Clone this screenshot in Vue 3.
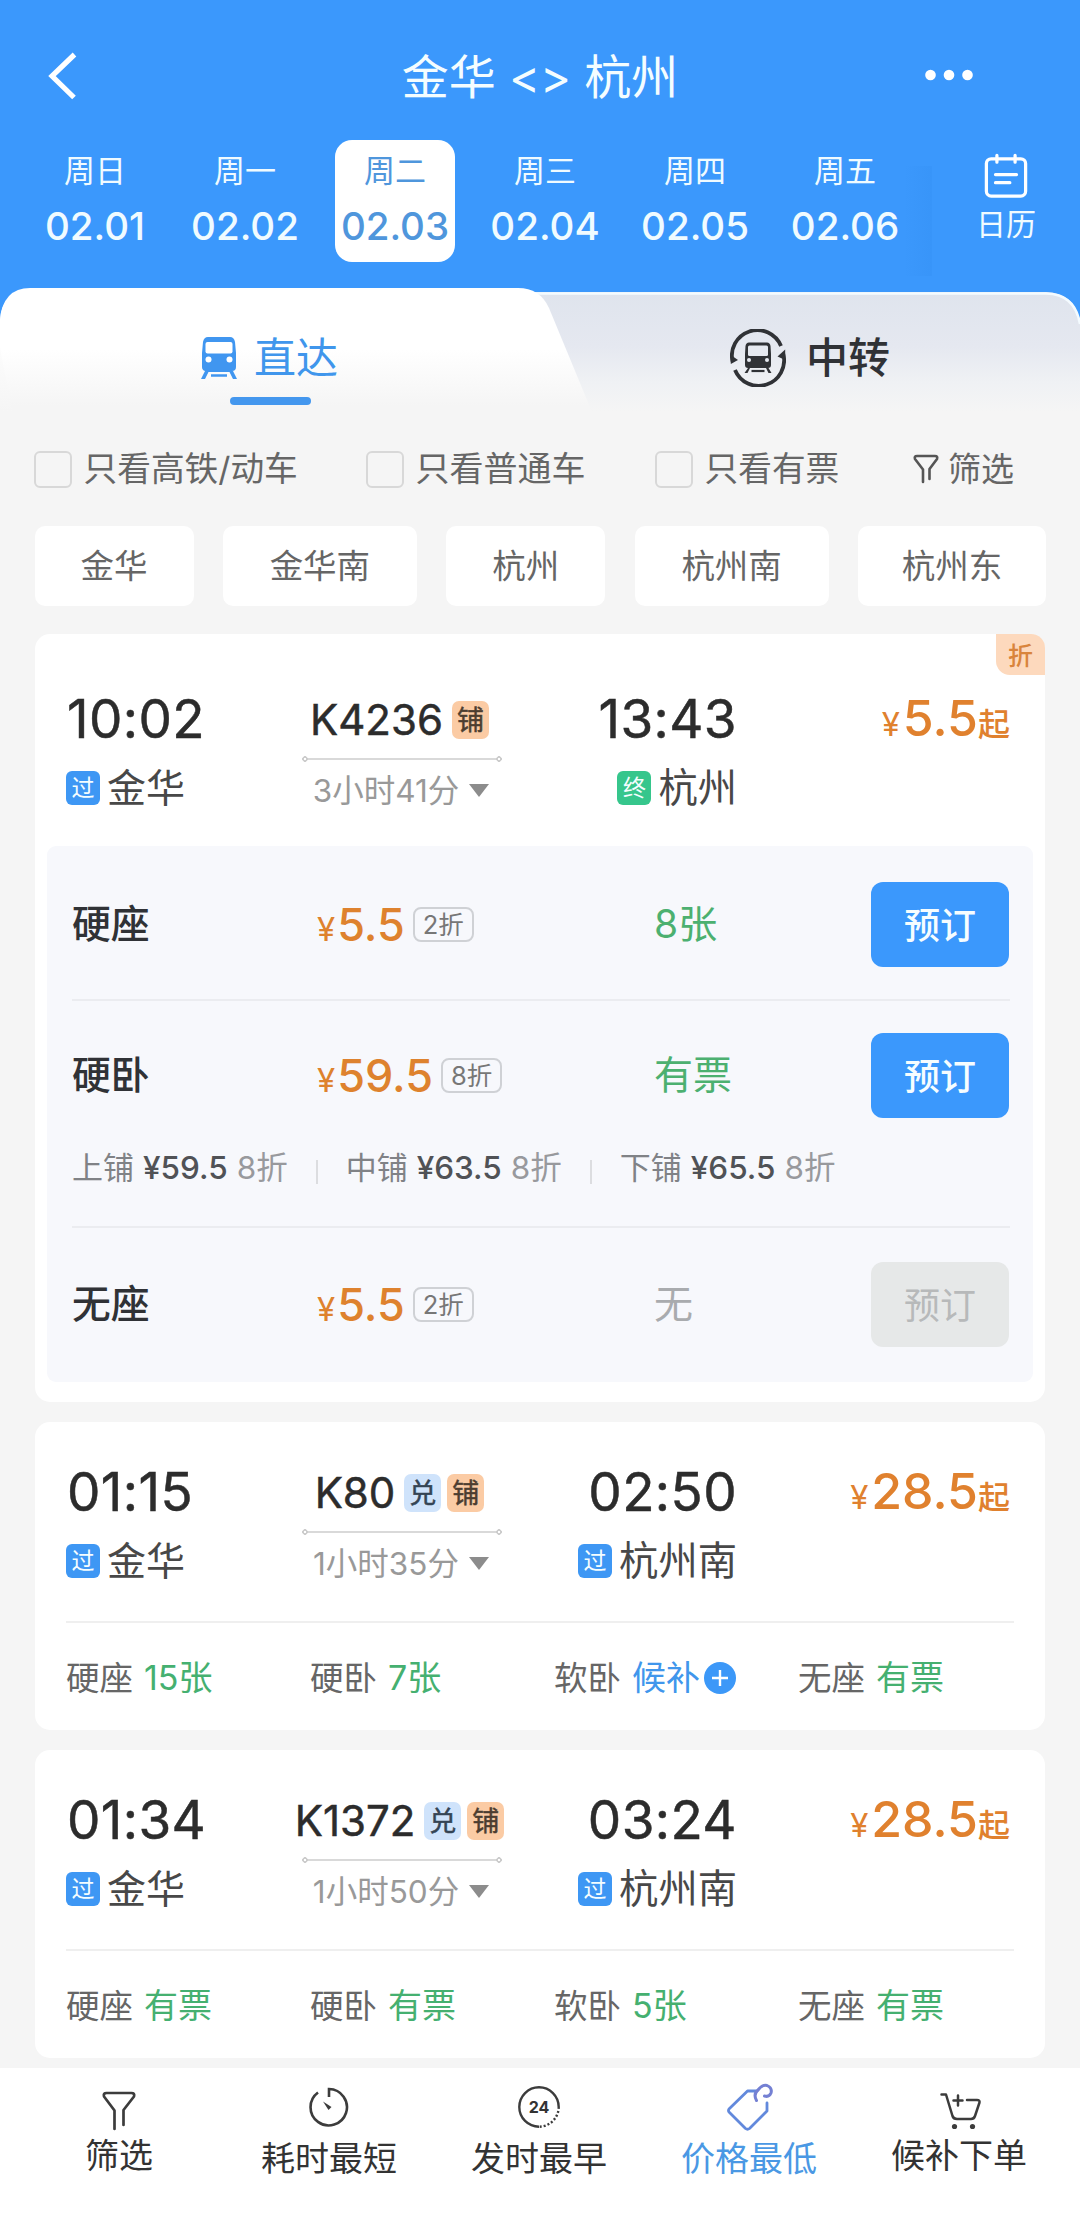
<script setup>
const days = [
  { week: '周日', date: '02.01' },
  { week: '周一', date: '02.02' },
  { week: '周二', date: '02.03', active: true },
  { week: '周三', date: '02.04' },
  { week: '周四', date: '02.05' },
  { week: '周五', date: '02.06' },
]

const checks = [
  { text: '只看高铁/动车', cls: 'c1' },
  { text: '只看普通车', cls: 'c2' },
  { text: '只看有票', cls: 'c3' },
]

const stations = [
  { name: '金华', cls: 's1' },
  { name: '金华南', cls: 's2' },
  { name: '杭州', cls: 's1' },
  { name: '杭州南', cls: 's2' },
  { name: '杭州东', cls: 's3' },
]

const trains = [
  {
    no: 'K4236', tags: ['铺'], depart: '10:02', arrive: '13:43', duration: '3小时41分',
    from: '金华', to: '杭州', toTag: '终', price: '5.5', discount: true,
    rows: [
      { seat: '硬座', price: '5.5', off: '2折', left: '8张', open: true },
      {
        seat: '硬卧', price: '59.5', off: '8折', left: '有票', open: true,
        berths: [
          { name: '上铺', price: '¥59.5', off: '8折' },
          { name: '中铺', price: '¥63.5', off: '8折' },
          { name: '下铺', price: '¥65.5', off: '8折' },
        ],
      },
      { seat: '无座', price: '5.5', off: '2折', left: '无', open: false },
    ],
  },
  {
    no: 'K80', tags: ['兑', '铺'], depart: '01:15', arrive: '02:50', duration: '1小时35分',
    from: '金华', to: '杭州南', toTag: '过', price: '28.5',
    seats: [
      { name: '硬座', left: '15张' },
      { name: '硬卧', left: '7张' },
      { name: '软卧', left: '候补', wait: true },
      { name: '无座', left: '有票' },
    ],
  },
  {
    no: 'K1372', tags: ['兑', '铺'], depart: '01:34', arrive: '03:24', duration: '1小时50分',
    from: '金华', to: '杭州南', toTag: '过', price: '28.5',
    seats: [
      { name: '硬座', left: '有票' },
      { name: '硬卧', left: '有票' },
      { name: '软卧', left: '5张' },
      { name: '无座', left: '有票' },
    ],
  },
]
</script>

<template>
  <div class="page">
    <header class="head">
      <div class="title-bar">
        <svg class="back" width="34" height="50" viewBox="0 0 34 50"><path d="M29.500 3.500 L7 25 L29 46.500" fill="none" stroke="#fff" stroke-width="5.200" /></svg>
        <h1>金华 &lt;&gt; 杭州</h1>
        <svg class="more" width="50" height="14" viewBox="0 0 50 14" fill="#fff"><circle cx="6.500" cy="7" r="5.300" /><circle cx="25" cy="7" r="5.300" /><circle cx="43.500" cy="7" r="5.300" /></svg>
      </div>
      <div class="dates">
        <div class="days">
          <div v-for="d in days" :key="d.date" class="day" :class="{ active: d.active }">
            <span class="week">{{ d.week }}</span>
            <span class="date">{{ d.date }}</span>
          </div>
        </div>
        <div class="calendar">
          <svg width="44" height="46" viewBox="0 0 46 48" fill="none" stroke="#fff" stroke-width="3.400" stroke-linecap="round">
            <rect x="2.500" y="6" width="41" height="39" rx="5" />
            <path d="M13.500 2.500v7M32.500 2.500v7M12 22.500h22M12 31h15" />
          </svg>
          <span>日历</span>
        </div>
      </div>
    </header>

    <nav class="tabs">
      <svg class="tabs-bg" width="1080" height="124" viewBox="0 0 1080 124">
        <defs>
          <linearGradient id="idle" x1="0" y1="0" x2="0" y2="1">
            <stop offset="0" stop-color="#dfe4ed" /><stop offset=".45" stop-color="#e5e8f0" /><stop offset=".75" stop-color="#eff1f4" /><stop offset="1" stop-color="#f5f5f5" />
          </linearGradient>
          <linearGradient id="side" x1="0" y1="0" x2="0" y2="1">
            <stop offset=".3" stop-color="#fff" /><stop offset="1" stop-color="#f5f5f5" />
          </linearGradient>
          <linearGradient id="live" x1="0" y1="0" x2="0" y2="1">
            <stop offset=".5" stop-color="#fff" /><stop offset=".95" stop-color="#f5f5f5" />
          </linearGradient>
        </defs>
        <path d="M0 124V32Q1 4 30 4H300V124Z" fill="url(#side)" />
        <path d="M300 124V4H1046Q1076 5 1080 36V124Z" fill="url(#idle)" />
        <path d="M500 5.500H1046Q1075 6 1080 36" fill="none" stroke="#f4fbff" stroke-width="2.500" />
        <path d="M12 124L0 60V32Q3 0 30 0H518Q540 0 549 20L592 124Z" fill="url(#live)" />
      </svg>
      <div class="tab on">
        <svg width="36" height="42" viewBox="0 0 36 42">
          <path d="M7 0H29Q33 0 34 5L35 16V30Q35 34 31 34H32L36 42H32L28.500 35H7.500L4 42H0L4 34Q1 33 1 30V16L2 5Q3 0 7 0Z" fill="#4096f0" />
          <rect x="4.500" y="5" width="27" height="11.500" rx="2" fill="#fff" />
          <circle cx="7.500" cy="22.500" r="3" fill="#fff" /><circle cx="28.500" cy="22.500" r="3" fill="#fff" />
          <path d="M10 38.500H26" stroke="#4096f0" stroke-width="2.500" />
        </svg>
        <span>直达</span>
        <i class="bar"></i>
      </div>
      <div class="tab off">
        <svg width="56" height="58" viewBox="0 0 56 58" fill="none" stroke="#303236" stroke-width="3.800">
          <path d="M51 17A25.500 25.500 0 0 0 2.700 33" />
          <path d="M5 41A25.500 25.500 0 0 0 53.300 25" />
          <path d="M0.800 35V26L8 31Z" fill="#303236" stroke="none" />
          <path d="M55.200 20.500V31L47.500 27.500Z" fill="#303236" stroke="none" />
          <path d="M19 13.500H37Q40 13.500 40.500 17L41 25V36Q41 39 38 39H38.500L41.500 44H38.500L36 39H20L17.500 44H14.500L18 39Q15 39 15 36V25L15.500 17Q16 13.500 19 13.500Z" fill="#303236" stroke="none" />
          <rect x="18" y="16.500" width="20" height="10.500" rx="1.500" fill="#e6e9f0" stroke="none" />
          <circle cx="19" cy="31" r="2" fill="#e6e9f0" stroke="none" /><circle cx="37" cy="31" r="2" fill="#e6e9f0" stroke="none" />
          <path d="M21.500 42H34.500" stroke-width="2.200" />
        </svg>
        <span>中转</span>
      </div>
    </nav>

    <div class="checks">
      <label v-for="c in checks" :key="c.text" class="check" :class="c.cls"><i class="box"></i><span>{{ c.text }}</span></label>
      <div class="funnel">
        <svg width="26" height="30" viewBox="0 0 26 30" fill="none" stroke="#555" stroke-width="2.600" stroke-linejoin="round" stroke-linecap="round"><path d="M10 28V15.500L2 5Q1 2 4 2H22Q25 2 24 5L16.500 15V25" /></svg>
        <span>筛选</span>
      </div>
    </div>

    <div class="chips">
      <div v-for="s in stations" :key="s.name" class="chip" :class="s.cls">{{ s.name }}</div>
    </div>

    <main class="list">
      <section v-for="t in trains" :key="t.no" class="card" :class="{ opened: t.rows }">
        <b v-if="t.discount" class="corner">折</b>
        <div class="summary">
          <div class="end">
            <div class="time">{{ t.depart }}</div>
            <div class="place"><i class="mark">过</i>{{ t.from }}</div>
          </div>
          <div class="mid">
            <div class="no">{{ t.no }}<i v-for="g in t.tags" :key="g" class="tag" :class="{ blue: g === '兑' }">{{ g }}</i></div>
            <div class="track"></div>
            <div class="dur">{{ t.duration }}<i class="caret"></i></div>
          </div>
          <div class="end right">
            <div class="time">{{ t.arrive }}</div>
            <div class="place"><i class="mark" :class="{ green: t.toTag === '终' }">{{ t.toTag }}</i>{{ t.to }}</div>
          </div>
          <div class="from-price"><small>¥</small>{{ t.price }}<em>起</em></div>
        </div>

        <div v-if="t.rows" class="panel">
          <div v-for="r in t.rows" :key="r.seat" class="class-row">
            <div class="line">
              <span class="seat">{{ r.seat }}</span>
              <span class="fare"><small>¥</small>{{ r.price }}<i class="off-tag">{{ r.off }}</i></span>
              <span class="left" :class="{ none: !r.open }">{{ r.left }}</span>
              <button class="book" :class="{ disabled: !r.open }">预订</button>
            </div>
            <div v-if="r.berths" class="berths">
              <span v-for="b in r.berths" :key="b.name" class="berth">{{ b.name }}<b>{{ b.price }}</b><i>{{ b.off }}</i></span>
            </div>
          </div>
        </div>

        <div v-else class="seats">
          <div v-for="s in t.seats" :key="s.name" class="seat-cell">
            <span>{{ s.name }}</span><span class="val" :class="{ wait: s.wait }">{{ s.left }}</span>
            <svg v-if="s.wait" width="32" height="32" viewBox="0 0 32 32"><circle cx="16" cy="16" r="16" fill="#3c98f8" /><path d="M16 8V24M8 16H24" stroke="#fff" stroke-width="2.400" /></svg>
          </div>
        </div>
      </section>
    </main>

    <footer class="bottom">
      <div class="act high">
        <svg width="34" height="40" viewBox="0 0 34 40" fill="none" stroke="#3c3c3c" stroke-width="2.700" stroke-linecap="round" stroke-linejoin="round"><path d="M12.500 38V19.500L2 5.500Q1 2 4.500 2H29.500Q33 2 32 5.500L21.500 19V34" /></svg>
        <span>筛选</span>
      </div>
      <div class="act">
        <svg width="42" height="42" viewBox="0 0 42 42" fill="none" stroke="#3c3c3c" stroke-width="2.600"><path d="M21 11V3A18.200 18.200 0 1 1 10 6.500" /><path d="M15 15.500L23.500 21L20.500 24Z" fill="#3c3c3c" stroke="none" /></svg>
        <span>耗时最短</span>
      </div>
      <div class="act">
        <div class="clock24">
          <svg width="44" height="44" viewBox="0 0 44 44" fill="none" stroke="#3c3c3c" stroke-width="2.400"><path d="M22 41.700A19.700 19.700 0 1 1 41.700 22" /><path d="M41.700 22A19.700 19.700 0 0 1 22 41.700" stroke-dasharray="2 2" /></svg>
          <b>24</b>
        </div>
        <span>发时最早</span>
      </div>
      <div class="act picked">
        <svg width="48" height="48" viewBox="0 0 48 48" fill="none" stroke="#6289dc" stroke-width="2.800" stroke-linejoin="round" stroke-linecap="round"><path d="M32 8H22.500L4 26Q3 27.500 4 29L20.500 45.500Q22.500 47 24.500 45.500L42 28V20" /><path d="M31.500 17.500Q28 11 33 7Q37 1.500 42 2.500Q47.500 5 46 10Q44 14.500 39.500 13" stroke="#7480d3" stroke-width="3" /></svg>
        <span>价格最低</span>
      </div>
      <div class="act high cart">
        <svg width="42" height="38" viewBox="0 0 42 38" fill="none" stroke="#3c3c3c" stroke-width="2.500" stroke-linecap="round" stroke-linejoin="round"><path d="M1.500 2.500H6L12.500 24Q13.500 27 17 27H31Q34 27 35 24L39.500 10.500Q40 8 37 8H27M18 3.500V13.500M13.500 8.500H22.500" /><circle cx="14.500" cy="34.500" r="2.600" fill="#3c3c3c" stroke="none" /><circle cx="32.500" cy="34.500" r="2.600" fill="#3c3c3c" stroke="none" /></svg>
        <span>候补下单</span>
      </div>
    </footer>
  </div>
</template>

<style>
body { background: #f5f5f5; }
</style>

<style scoped>
* { box-sizing: border-box; }
i, em { font-style: normal; }
.page { width: 1080px; height: 2228px; overflow: hidden; background: #f5f5f5; font-family: Inter, "Noto Sans CJK SC", sans-serif; color: #333; display: flex; flex-direction: column; }

.head { background: #3b98fc; height: 288px; color: #fff; flex: none; }
.title-bar { height: 140px; padding: 14px 106px 0 45px; display: grid; grid-template-columns: 200px 1fr 139px; align-items: center; }
.title-bar .back { margin-top: -2px; }
.title-bar .more { justify-self: end; margin-top: -4px; }
h1 { margin: 0; font-size: 47px; font-weight: 400; line-height: 60px; text-align: center; color: #f4fdff; }
.dates { display: flex; height: 148px; }
.days { width: 932px; padding-left: 20px; display: flex; background: linear-gradient(90deg, rgba(30, 120, 220, 0) 97%, rgba(30, 120, 220, .1)) no-repeat 0 26px / 932px 110px; }
.day { width: 120px; height: 122px; margin: 0 15px; border-radius: 17px; display: flex; flex-direction: column; align-items: center; color: #f0fbff; }
.day.active { background: #fff; color: #4f96dc; }
.week { font-size: 31px; line-height: 40px; margin-top: 11px; }
.date { font-size: 38.500px; line-height: 48px; margin-top: 11px; font-weight: 500; }
.calendar { width: 148px; display: flex; flex-direction: column; align-items: center; padding-top: 13px; color: #f0fbff; }
.calendar span { font-size: 30px; line-height: 40px; margin-top: 5px; }

.tabs { position: relative; display: flex; height: 124px; flex: none; background: linear-gradient(#3b98fc 60px, #f5f5f5 60px); }
.tabs-bg { position: absolute; left: 0; top: 0; }
.tab { position: relative; height: 124px; display: flex; align-items: center; font-size: 42px; }
.tab.on { width: 540px; padding: 0 0 0 201px; color: #4096ec; }
.tab.on svg { margin-top: 15px; }
.tab.on span { margin-left: 17px; margin-top: 8px; font-weight: 400; }
.bar { position: absolute; left: 230px; top: 109px; width: 81px; height: 8px; border-radius: 4px; background: #4497ee; }
.tab.off { width: 540px; padding-left: 190px; color: #303236; }
.tab.off svg { margin-top: 16px; }
.tab.off span { margin-left: 20px; margin-top: 8px; font-weight: 500; }

.checks { display: flex; align-items: center; height: 114px; flex: none; padding-left: 34px; color: #666; font-size: 33.700px; }
.check { display: flex; align-items: center; }
.check.c1 { width: 332px; }
.check.c2 { width: 289px; font-size: 34px; }
.check.c3 { width: 258px; }
.box { width: 38px; height: 37px; border: 2.500px solid #d8d8d8; border-radius: 6px; margin-right: 11.500px; }
.check span, .funnel span { line-height: 44px; }
.funnel { display: flex; align-items: center; font-size: 33px; }
.funnel svg { margin-right: 9px; }

.chips { display: flex; justify-content: space-between; padding: 0 34px 0 34.500px; height: 80px; flex: none; }
.chip { height: 80px; line-height: 81px; border-radius: 10px; background: #fff; text-align: center; font-size: 33.500px; color: #666; }
.s1 { width: 159px; }
.s2 { width: 194px; }
.s3 { width: 188px; }

.list { margin-top: 28px; padding: 0 35px; display: flex; flex-direction: column; gap: 20px; flex: none; }
.card { position: relative; background: #fff; border-radius: 15px; height: 308px; padding: 40px 0 0; }
.card.opened { height: 768px; padding-top: 55px; }
.corner { position: absolute; right: 0; top: 0; width: 49px; height: 41px; line-height: 44px; text-align: center; border-radius: 0 14px 0 14px; background: #fdd9bd; color: #d9843c; font-size: 25px; font-weight: 500; }
.summary { display: grid; grid-template-columns: 235px 202px 234px 273px; padding-left: 31px; height: 159px; }
.card.opened .summary { height: 157px; }
.time { font-size: 53px; line-height: 60px; font-weight: 400; letter-spacing: .4px; padding-left: 1px; color: #2c2c2c; -webkit-text-stroke: .5px #2c2c2c; }
.place { display: flex; align-items: center; font-size: 39px; line-height: 50px; margin-top: 14px; color: #484848; }
.right .place { font-size: 39.300px; }
.mark { width: 34px; height: 34px; line-height: 34px; border-radius: 6px; margin-right: 7px; background: #3e97f4; color: #f4fdff; text-align: center; font-size: 23px; }
.mark.green { background: #36c68c; }
.right { display: flex; flex-direction: column; align-items: flex-end; }
.mid { display: flex; flex-direction: column; align-items: center; }
.no { display: flex; align-items: center; height: 60px; padding-right: 5px; font-size: 42px; font-weight: 400; white-space: nowrap; color: #2c2c2c; -webkit-text-stroke: .5px #2c2c2c; }
.tag { width: 37px; height: 38px; line-height: 40px; margin: 1px 0 0 6px; border-radius: 7px; background: #fbcba4; font-size: 27px; text-align: center; color: #4c3d30; -webkit-text-stroke: .5px #4c3d30; }
.tag.blue { background: #cfe3fb; color: #344454; -webkit-text-stroke-color: #344454; }
.no .tag:first-of-type { margin-left: 9px; }
.track { width: 200px; height: 6px; margin-top: 7px; background: radial-gradient(circle at 3px 3px, #fff 1px, #ccc 1.500px, #ccc 2.600px, transparent 3px), radial-gradient(circle at 197px 3px, #fff 1px, #ccc 1.500px, #ccc 2.600px, transparent 3px), linear-gradient(#d9d9d9, #d9d9d9) no-repeat 5px 2px / 190px 2px; }
.dur { display: flex; align-items: center; font-size: 31.500px; line-height: 40px; margin-top: 9px; padding-right: 2px; color: #999; }
.caret { margin: 0 0 2px 10px; border: 10px solid transparent; border-top: 13px solid #8c8c8c; border-bottom: 0; }
.from-price { justify-self: end; font-size: 50px; line-height: 60px; height: 60px; margin-top: -1px; font-weight: 500; color: #e0812e; white-space: nowrap; }
.from-price small { font-size: 33px; font-weight: 400; margin-right: 3px; }
.from-price em { font-size: 32px; font-weight: 500; }

.panel { margin: 0 12px 0; background: #f7f8fc; border-radius: 9px; height: 536px; padding: 0 23px 0 25px; }
.class-row { height: 153px; padding-top: 36px; }
.class-row:nth-child(2) { height: 229px; padding-top: 32px; border-top: 2px solid #ebecf0; border-bottom: 2px solid #ebecf0; }
.class-row:nth-child(3) { padding-top: 34px; }
.line { display: grid; grid-template-columns: 245px 337px 217px 138px; align-items: center; height: 85px; }
.seat { font-size: 38.800px; line-height: 50px; font-weight: 500; color: #303236; padding-bottom: 1px; }
.fare { display: flex; align-items: baseline; font-size: 45px; font-weight: 500; line-height: 50px; padding-top: 5px; color: #de822e; }
.fare small { font-size: 33px; font-weight: 400; margin-right: 2px; }
.off-tag { align-self: center; height: 35px; line-height: 31px; padding: 0 8px; margin: 0 0 5px 8px; border: 2px solid #cfd1d5; border-radius: 8px; font-size: 25.500px; font-weight: 400; color: #777; }
.left { font-size: 39px; line-height: 50px; color: #4cb070; padding-bottom: 1px; }
.left.none { color: #a9abae; }
.book { border: 0; padding: 0 0 4px; width: 138px; height: 85px; border-radius: 12px; background: #3b98fc; color: #f6fdff; font: 500 36px Inter, "Noto Sans CJK SC", sans-serif; }
.book.disabled { background: #e6e8e8; color: #b7b9ba; font-weight: 400; }
.berths { display: flex; margin-top: 26px; height: 48px; line-height: 48px; font-size: 31px; color: #808286; }
.berth { display: flex; }
.berth b { font-weight: 500; font-size: 31.500px; color: #505256; margin-left: 9px; }
.berth i { margin-left: 9px; color: #98999d; font-size: 31.500px; }
.berth + .berth { margin-left: 28px; padding-left: 30px; background: linear-gradient(#dcdde0, #dcdde0) no-repeat 0 16px / 2px 24px; }

.seats { margin: 0 31px; border-top: 2px solid #efefef; height: 107px; display: grid; grid-template-columns: repeat(4, 244px); align-items: center; font-size: 33.500px; color: #666; }
.seat-cell { display: flex; align-items: center; padding-top: 4px; line-height: 44px; }
.val { margin-left: 11px; color: #45b070; font-size: 34px; }
.val.wait { color: #4096ec; margin-right: 4px; }

.bottom { margin-top: 10px; flex: 1; background: #fff; padding: 0 14px; display: flex; }
.act { width: 210px; display: flex; flex-direction: column; align-items: center; font-size: 34px; color: #333; padding-top: 15px; }
.act > svg, .clock24 { height: 48px; }
.act span { line-height: 44px; margin-top: 6px; }
.act.high { padding-top: 19px; }
.act.high span { margin-top: -1px; }
.act.cart svg { margin-left: 3px; }
.clock24 { display: grid; place-items: center; width: 44px; }
.clock24 > * { grid-area: 1 / 1; }
.clock24 b { font-size: 16px; font-weight: 700; }
.act.picked { color: #4a98e4; }
</style>
